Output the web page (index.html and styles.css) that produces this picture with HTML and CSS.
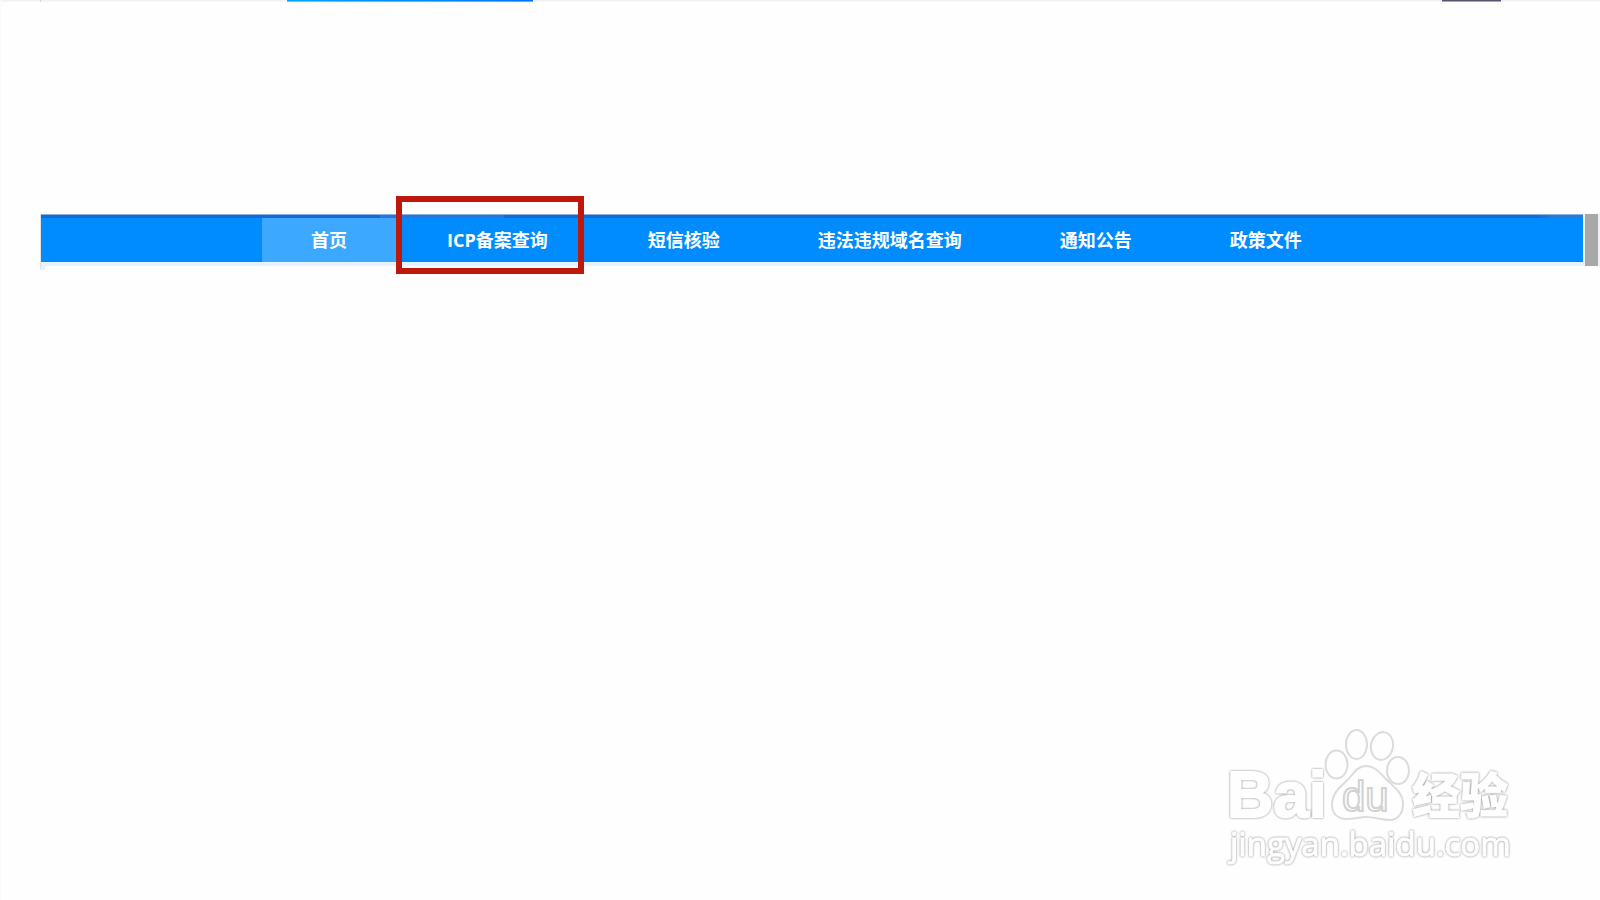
FILE: index.html
```
<!DOCTYPE html>
<html lang="zh-CN">
<head>
  <meta charset="UTF-8">
  <meta name="viewport" content="width=device-width, initial-scale=1.0">
  <title>ICP备案查询</title>
  <link rel="stylesheet" href="styles.css">
</head>
<body>
  <div class="top-strip">
    <span class="tick"></span>
    <span class="strip-blue"></span>
    <span class="strip-dark"></span>
  </div>

  <div class="banner">
    <header class="site-header">
      <nav class="nav">
        <ul class="nav-list">
          <li><a class="active" href="#">首页</a></li>
          <li class="marked"><a href="#">ICP备案查询</a></li>
          <li><a href="#">短信核验</a></li>
          <li><a href="#">违法违规域名查询</a></li>
          <li><a href="#">通知公告</a></li>
          <li><a href="#">政策文件</a></li>
        </ul>
      </nav>
      <div class="nav-shadow"></div>
      <div class="nav-tail"></div>
    </header>
    <div class="scroll-track">
      <div class="scroll-thumb"></div>
    </div>
  </div>

  <svg class="watermark" viewBox="0 0 320 170" width="320" height="170">
    <g class="outline">
      <text class="latin" x="17" y="107">Bai</text>
      <text class="cjk" x="202" y="103">经验</text>
      <text class="site" x="20" y="146">jingyan.baidu.com</text>
    </g>
    <g class="paw">
      <ellipse cx="126.5" cy="54.5" rx="11" ry="14"/>
      <ellipse cx="146.5" cy="34.5" rx="10.5" ry="14.5"/>
      <ellipse cx="172" cy="36" rx="11" ry="14" transform="rotate(10 172 36)"/>
      <ellipse cx="188" cy="60.5" rx="11" ry="13.5"/>
      <path d="M156 56C149 56 145 61 141 66C135 74 122 80 122 95C122 104 128 109 137 109C145 109 149 107 156 107C165 107 171 110 180 110C188 110 193 103 193 94C193 83 185 78 177 70C170 63 165 56 156 56Z"/>
      <text class="du" x="132" y="101">du</text>
    </g>
  </svg>
</body>
</html>
```
FILE: styles.css
```
* {
  box-sizing: border-box;
}

body {
  margin: 0;
  min-height: 100vh;
  position: relative;
  background-color: #fefefe;
  border-left: 1px solid #fafafa;
  font-family: 'Open Sans', 'Noto Sans CJK SC', sans-serif;
}

.top-strip {
  display: flex;
  height: 2px;
  background: linear-gradient(#f2f2f2 1px, #f7f7f7 1px);
}

.tick {
  width: 1px;
  margin-left: 39px;
  background-color: #d5d5d5;
}

.strip-blue {
  width: 246px;
  margin-left: 246px;
  background: linear-gradient(transparent 1px, rgba(255, 255, 255, 0.4) 1px), linear-gradient(to right, #00a5ff, #0073ff);
}

.strip-dark {
  width: 59px;
  margin-left: auto;
  margin-right: 99px;
  background: linear-gradient(#55566e 1px, #a5a5b8 1px);
}

.banner {
  display: flex;
  align-items: flex-start;
  margin: 212px 0 0 39px;
}

.site-header {
  flex: 1;
  border-left: 1px solid #e2e2e2;
}

.nav {
  background-color: #008cff;
  border-top: 1px solid #86b2e9;
}

.nav::before {
  content: '';
  display: block;
  height: 3px;
  background: linear-gradient(to right, #1469d6 22%, #2c75d8 22%, #2c75d8 30%, #1469d6 30%, #1469d6 97%, #3477cc 98%);
}

.nav-list {
  display: flex;
  max-width: 1100px;
  margin: 0 auto;
  padding: 0;
  list-style: none;
}

.nav-list a {
  display: block;
  padding: 0 49px;
  color: #fff;
  font-size: 18px;
  font-weight: bold;
  line-height: 44px;
  text-decoration: none;
  white-space: nowrap;
}

.nav-list .active {
  background-color: #3da8ff;
}

/* red frame around the query entry */
.marked {
  position: relative;
}

.nav-list .marked a {
  padding: 0 51px;
}

.marked::after {
  content: '';
  box-sizing: border-box;
  position: absolute;
  top: -22px;
  left: 0;
  width: 188px;
  height: 78px;
  border: 6px solid #bd180b;
  pointer-events: none;
}

.nav-shadow {
  height: 4px;
  background-color: #e4f3ff;
}

.nav-tail {
  width: 4px;
  height: 4px;
  background-color: #e4f3ff;
}

.scroll-track {
  width: 17px;
  padding: 0 2px;
  background-color: #f1f1f1;
}

.scroll-thumb {
  height: 52px;
  background-color: #a8a8a8;
}

.watermark {
  position: absolute;
  right: 70px;
  bottom: 20px;
}

.outline {
  fill: #fefefe;
  stroke: #fefefe;
  stroke-width: 2px;
  filter: drop-shadow(0 0 1px #888);
}

.latin {
  font: bold 64px 'Liberation Sans', sans-serif;
}

.cjk {
  font: 900 48px 'Noto Sans CJK SC', sans-serif;
  stroke-width: 1px;
}

.site {
  font: 33px 'Open Sans', sans-serif;
  stroke-width: 1px;
}

.paw {
  fill: #fefefe;
  stroke: #dcdcdc;
  stroke-width: 2px;
}

.du {
  font: 42px 'Liberation Sans', sans-serif;
  stroke: #d2d2d2;
}
```
